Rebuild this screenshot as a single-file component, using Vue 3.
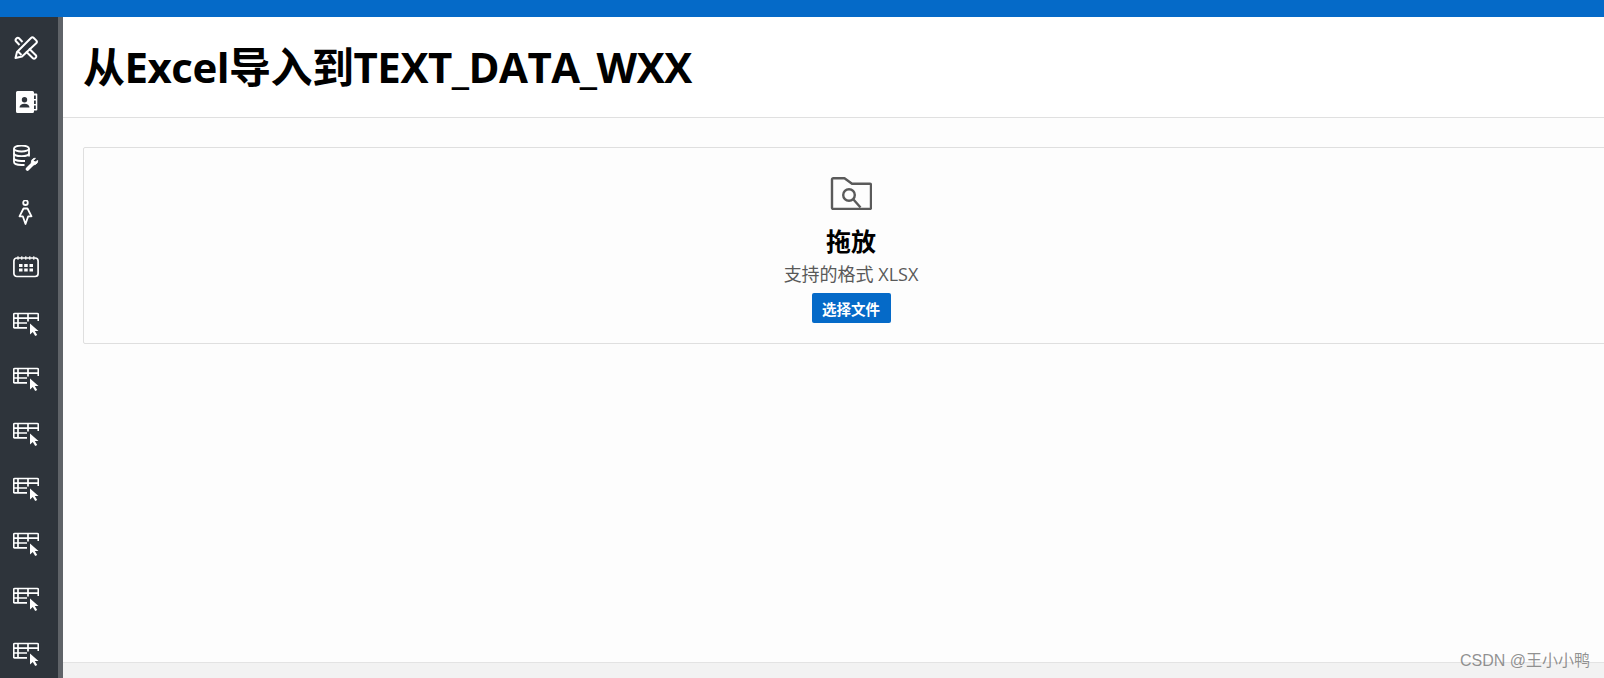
<script setup>
const tableCount = 7
</script>

<template>
  <div class="page">
    <div class="topbar"></div>
    <div class="body">
      <nav class="sidebar">
        <a class="nav-item">
          <svg viewBox="0 0 26 26" fill="none" stroke="currentColor" stroke-width="2" stroke-linejoin="round">
            <path d="M2.500 23l1.500-6L18 3a2 2 0 0 1 2.800 0l2.400 2.400a2 2 0 0 1 0 2.800L9 21.500z" />
            <path d="M5 16.500l3.500 3.500" />
            <path d="M9.500 7L6 3.300a1.600 1.600 0 0 0-2.300 0L3 4a1.600 1.600 0 0 0 0 2.300l3.500 3.700" />
            <path d="M16 13.500l6.800 6.800a1.600 1.600 0 0 1 0 2.300l-.6.600a1.600 1.600 0 0 1-2.300 0L13 16.500" />
          </svg>
        </a>
        <a class="nav-item">
          <svg viewBox="0 0 26 26" fill="currentColor">
            <path fill-rule="evenodd" d="M3 2.500A1.500 1.500 0 0 1 4.500 1h15A1.500 1.500 0 0 1 21 2.500V3.500h2.500a.8.8 0 0 1 .8.8v15.400a.8.8 0 0 1-.8.8H21v1A1.500 1.500 0 0 1 19.500 23h-15A1.500 1.500 0 0 1 3 21.500zM21 5.500v3.500h1.800V5.500zm0 5v3.500h1.800v-3.500zm0 5v3.500h1.800v-3.500zM11.500 7a2.700 2.700 0 1 0 0 5.400 2.700 2.700 0 0 0 0-5.400zM6.500 17.500h10c0-2.300-2.200-3.800-5-3.800s-5 1.500-5 3.800z" />
          </svg>
        </a>
        <a class="nav-item">
          <svg viewBox="0 0 26 26" fill="none" stroke="currentColor" stroke-width="1.800">
            <ellipse cx="8.500" cy="3.500" rx="7.500" ry="3" />
            <path d="M1 3.500v13.500c0 1.700 3.300 3 7.500 3h3" />
            <path d="M16 3.500v8" />
            <path d="M1 8.200c0 1.700 3.300 3 7.500 3s7.500-1.300 7.500-3" />
            <path d="M1 13c0 1.700 3.300 3 7.500 3h3.500" />
            <path d="M14.500 24l6-6" stroke-width="3.600" stroke-linecap="round" />
            <path d="M19 19.500a4.500 4.500 0 0 1-.2-4.400 3.800 3.800 0 0 1 3.600-1.900l-2 2.300 1.500 1.700 2.800-1.700a3.800 3.800 0 0 1-1.700 3.600 4.500 4.500 0 0 1-4 .4z" fill="currentColor" stroke-width="0.900" />
          </svg>
        </a>
        <a class="nav-item">
          <svg viewBox="0 0 26 26" fill="none" stroke="currentColor" stroke-width="1.800" stroke-linejoin="round">
            <circle cx="12.500" cy="2.700" r="2.300" />
            <path d="M10.500 8.500h4l4 7.800h-3.300L12.500 24l-2.700-7.700H6.500z" />
          </svg>
        </a>
        <a class="nav-item">
          <svg viewBox="0 0 26 26" fill="none" stroke="currentColor" stroke-width="1.700">
            <rect x="0.900" y="3" width="24.200" height="18.500" rx="3" />
            <path d="M5 1.200v3.500M8.800 1.200v3.500M12.800 1.200v3.500M16.800 1.200v3.500M20.800 1.200v3.500" stroke-width="1.200" />
            <path d="M6 9h3.500v3H6zM11.200 9h3.500v3h-3.500zM16.500 9H20v3h-3.500zM6 13.500h3.500v3H6zM11.200 13.500h3.500v3h-3.500zM16.500 13.500H20v3h-3.500z" fill="currentColor" stroke="none" />
          </svg>
        </a>
        <a v-for="n in tableCount" :key="n" class="nav-item">
          <svg viewBox="0 0 26 26" fill="none" stroke="currentColor" stroke-width="1.700">
            <path d="M14 17.800H1.500a.8.8 0 0 1-.8-.8V4.300a.8.8 0 0 1 .8-.8h23a.8.8 0 0 1 .8.8V11" />
            <path d="M.7 8.200h24.600M.7 13h13.300M5 3.500v14.300M15 3.500v8" />
            <path d="M17 13.500v11l2.800-2.600 2.400 4 2-1-2.400-4H25.500z" fill="currentColor" stroke="none" />
          </svg>
        </a>
      </nav>
      <div class="scroll-strip"></div>
      <main class="main">
        <header class="head">
          <h1>从Excel导入到TEXT_DATA_WXX</h1>
        </header>
        <section class="content">
          <div class="drop">
            <svg class="folder" viewBox="0 0 42 33" fill="none" stroke="#5a5a5a" stroke-width="2.400" stroke-linejoin="round">
              <path d="M2 2.500a1.300 1.300 0 0 1 1.300-1.300H14.500l7.500 5.500h17.700A1.300 1.300 0 0 1 41 8v23a1.300 1.300 0 0 1-1.300 1H3.300A1.300 1.300 0 0 1 2 31z" />
              <circle cx="19" cy="18" r="5.800" />
              <path d="M23.500 22.500l7 8" />
            </svg>
            <div class="drop-title">拖放</div>
            <div class="drop-sub">支持的格式 XLSX</div>
            <button class="pick">选择文件</button>
          </div>
        </section>
        <footer class="foot"></footer>
      </main>
    </div>
    <div class="mark">CSDN @王小小鸭</div>
  </div>
</template>

<style>
html, body {
  margin: 0;
  overflow: hidden;
}
</style>

<style scoped>
.page {
  position: relative;
  width: 1604px;
  height: 678px;
  display: flex;
  flex-direction: column;
  overflow: hidden;
  font-family: "Open Sans", "Noto Sans CJK SC", sans-serif;
  color: #000;
}

.topbar {
  height: 17px;
  background: #056ac8;
  flex-shrink: 0;
}

.body {
  flex: 1;
  display: flex;
  min-height: 0;
}

.sidebar {
  width: 58px;
  flex-shrink: 0;
  padding-top: 4px;
  background: #2e343b;
  color: #fff;
  overflow: hidden;
}

.nav-item {
  display: flex;
  justify-content: center;
  height: 55px;
  padding: 14px 6px 0 0;
  box-sizing: border-box;
}

.nav-item svg {
  width: 26px;
  height: 26px;
}

.scroll-strip {
  width: 5px;
  flex-shrink: 0;
  background: #5f6368;
}

.main {
  flex: 1;
  display: flex;
  flex-direction: column;
  min-width: 0;
  background: #fdfdfd;
}

.head {
  height: 100px;
  flex-shrink: 0;
  display: flex;
  align-items: center;
  padding-left: 20px;
  background: #fff;
  border-bottom: 1px solid #e0e0e0;
}

.head h1 {
  margin: 0;
  font-size: 42px;
  font-weight: 700;
  line-height: 1.2;
  letter-spacing: -0.5px;
  white-space: nowrap;
}

.content {
  flex: 1;
  padding: 29px 0 0 20px;
}

.drop {
  display: flex;
  flex-direction: column;
  align-items: center;
  height: 197px;
  width: calc(100% + 15px);
  margin-right: -15px;
  padding-top: 29px;
  box-sizing: border-box;
  border: 1px solid #dfdfdf;
  border-radius: 2px;
  background: #fdfdfd;
}

.folder {
  width: 42px;
  height: 33px;
}

.drop-title {
  margin-top: 15px;
  font-size: 25px;
  font-weight: 700;
  line-height: 32px;
}

.drop-sub {
  margin-top: 5px;
  font-size: 18px;
  line-height: 24px;
  color: #595959;
}

.pick {
  margin-top: 7px;
  width: 79px;
  height: 30px;
  padding: 0;
  border: none;
  border-radius: 2px;
  background: #056ac8;
  color: #fff;
  font-family: inherit;
  font-size: 14.500px;
  font-weight: 700;
}

.foot {
  height: 15px;
  flex-shrink: 0;
  background: #f2f2f2;
  border-top: 1px solid #e3e3e3;
}

.mark {
  position: absolute;
  right: 14px;
  bottom: 7px;
  font-family: "Liberation Sans", "Noto Sans CJK SC", sans-serif;
  font-size: 16px;
  line-height: 20px;
  color: rgba(110, 110, 110, 0.75);
}
</style>
